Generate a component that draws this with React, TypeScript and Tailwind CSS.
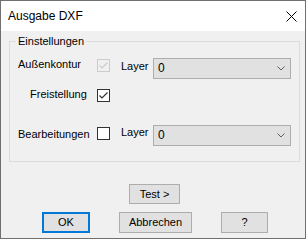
function CheckBox({ checked, disabled }: { checked?: boolean; disabled?: boolean }) {
  const color = disabled ? "#cccccc" : "#333333";
  return (
    <svg width="13" height="13" viewBox="0 0 13 13" className="block">
      <rect x="0.5" y="0.5" width="12" height="12" fill={disabled ? "#f0f0f0" : "#ffffff"} stroke={color} />
      {checked ? (
        <polyline points="2.5,6.5 5,9 10.5,3.5" fill="none" stroke={color} strokeWidth="1.2" />
      ) : null}
    </svg>
  );
}

function Combo({ value }: { value: string }) {
  return (
    <div className="w-[138px] h-[21px] bg-[#e1e1e1] border border-[#adadad] flex items-center justify-between pl-[4px] pr-[5px] text-[12px]">
      <span>{value}</span>
      <svg width="8" height="5" viewBox="0 0 8 5" className="block">
        <polyline points="0.5,0.5 4,4 7.5,0.5" fill="none" stroke="#606060" />
      </svg>
    </div>
  );
}

function Button({ label, width, primary }: { label: string; width: string; primary?: boolean }) {
  return (
    <button
      className={
        primary
          ? `${width} h-[21px] bg-[#e1e1e1] border-2 border-[#0078d7] flex items-center justify-center`
          : `${width} h-[21px] bg-[#e1e1e1] border border-[#adadad] flex items-center justify-center`
      }
    >
      {label}
    </button>
  );
}

export default function App() {
  return (
    <div className="min-h-screen bg-white">
      <div className="w-[306px] h-[239px] border border-[#707070] bg-[#f0f0f0] flex flex-col font-['Liberation_Sans',Arial,sans-serif] text-[11px] leading-[13px] text-black">
        <div className="h-[30px] bg-white flex items-center justify-between pl-[7px] pr-[8px]">
          <span className="text-[12px]">Ausgabe DXF</span>
          <svg width="11" height="11" viewBox="0 0 11 11" className="block">
            <path d="M0.5 0.5 L10.5 10.5 M10.5 0.5 L0.5 10.5" stroke="#000" strokeWidth="1" />
          </svg>
        </div>

        <fieldset className="mt-[3px] ml-[8px] mr-[5px] border border-[#dcdcdc] pb-[15px]">
          <legend className="ml-[6px] px-[2px] leading-[14px]">Einstellungen</legend>

          <div className="flex items-start h-[21px] mt-[10px] pl-[8px]">
            <span className="w-[79px]">Außenkontur</span>
            <div className="mt-[1px]">
              <CheckBox checked disabled />
            </div>
            <span className="ml-[11px] w-[32px] mt-[2px]">Layer</span>
            <Combo value="0" />
          </div>

          <div className="flex items-start h-[14px] mt-[9px] pl-[20px]">
            <span className="w-[67px]">Freistellung</span>
            <div className="mt-[1px]">
              <CheckBox checked />
            </div>
          </div>

          <div className="flex items-start h-[21px] mt-[23px] pl-[8px]">
            <span className="w-[79px] mt-[3px]">Bearbeitungen</span>
            <div className="mt-[2px]">
              <CheckBox />
            </div>
            <span className="ml-[11px] w-[32px] mt-[1px]">Layer</span>
            <Combo value="0" />
          </div>
        </fieldset>

        <div className="mt-[22px] ml-[128px]">
          <button className="w-[51px] h-[20px] bg-[#e1e1e1] border border-[#adadad] flex items-center justify-center">
            Test &gt;
          </button>
        </div>

        <div className="mt-[8px] ml-[41px] flex gap-[29px]">
          <Button label="OK" width="w-[48px]" primary />
          <Button label="Abbrechen" width="w-[73px]" />
          <Button label="?" width="w-[47px]" />
        </div>
      </div>
    </div>
  );
}
